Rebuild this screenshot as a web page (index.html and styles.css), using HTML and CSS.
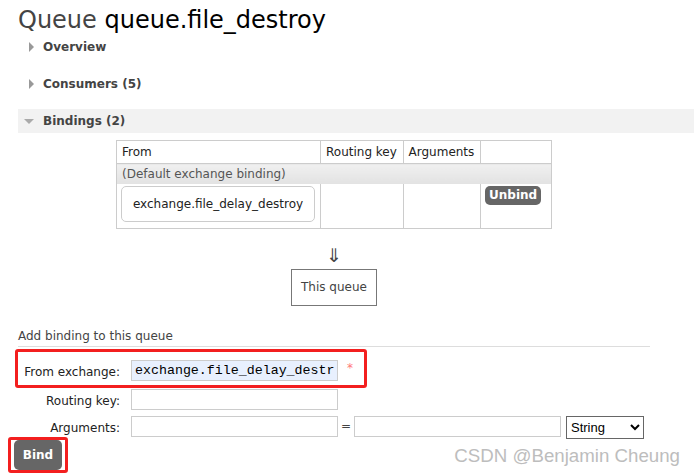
FILE: index.html
```html
<!DOCTYPE html>
<html lang="en">
<head>
    <meta charset="UTF-8">
    <title>Queue queue.file_destroy</title>
    <link rel="stylesheet" href="styles.css">
</head>
<body>
    <h1><span class="kind">Queue</span> queue.file_destroy</h1>

    <div class="section">
        <div class="section-head"><span class="tri right"></span>Overview</div>
    </div>
    <div class="section">
        <div class="section-head"><span class="tri right"></span>Consumers (5)</div>
    </div>
    <div class="section open">
        <div class="section-head"><span class="tri down"></span>Bindings (2)</div>
        <div class="bindings">
            <table class="list">
                <thead>
                    <tr>
                        <th class="c-from">From</th>
                        <th class="c-key">Routing key</th>
                        <th class="c-args">Arguments</th>
                        <th class="c-act"></th>
                    </tr>
                </thead>
                <tbody>
                    <tr class="default">
                        <td colspan="4">(Default exchange binding)</td>
                    </tr>
                    <tr>
                        <td><span class="exchange">exchange.file_delay_destroy</span></td>
                        <td></td>
                        <td></td>
                        <td class="act"><span class="btn small">Unbind</span></td>
                    </tr>
                </tbody>
            </table>
            <div class="arrow">&#8659;</div>
            <div class="this-queue">This queue</div>
        </div>
    </div>

    <h3 class="add-title">Add binding to this queue</h3>
    <form class="bind-form">
        <div class="form-row marked">
            <label>From exchange:</label>
            <input type="text" class="autofill" value="exchange.file_delay_destroy">
            <span class="req">*</span>
        </div>
        <div class="form-row">
            <label>Routing key:</label>
            <input type="text">
        </div>
        <div class="form-row">
            <label>Arguments:</label>
            <input type="text">
            <span class="eq">=</span>
            <input type="text">
            <select>
                <option>String</option>
            </select>
        </div>
        <div class="submit marked">
            <span class="btn">Bind</span>
        </div>
    </form>

    <div class="watermark">CSDN @Benjamin Cheung</div>
</body>
</html>
```

FILE: styles.css
```css
body {
    margin: 0;
    padding: 0 0 0 18px;
    font-family: "DejaVu Sans", Verdana, sans-serif;
    font-size: 12px;
    color: #484848;
    background: #fff;
    position: relative;
    height: 474px;
    overflow: hidden;
}
h1 {
    margin: 0;
    padding-top: 6px;
    height: 29px;
    font-size: 24px;
    font-weight: normal;
    color: #000;
    line-height: 29px;
}
h1 .kind {
    color: #444;
}
.section {
    margin-bottom: 13px;
}
.section-head {
    height: 24px;
    line-height: 24px;
    font-weight: bold;
    color: #444;
    display: flex;
    align-items: center;
}
.open .section-head {
    background: #f2f2f2;
}
.tri {
    display: inline-block;
    width: 0;
    height: 0;
}
.tri.right {
    border-top: 5px solid transparent;
    border-bottom: 5px solid transparent;
    border-left: 5px solid #999;
    margin-left: 11px;
    margin-right: 9px;
}
.tri.down {
    border-left: 5px solid transparent;
    border-right: 5px solid transparent;
    border-top: 5px solid #aaa;
    margin-left: 6px;
    margin-right: 9px;
}
.bindings {
    width: 632px;
    padding-top: 7px;
    display: flex;
    flex-direction: column;
    align-items: center;
}
table.list {
    border-collapse: collapse;
    border: 1px solid #ccc;
    width: 436px;
}
table.list th {
    text-align: left;
    font-weight: normal;
    color: #222;
    height: 22px;
    padding: 0 5px;
    border-left: 1px solid #ccc;
    white-space: nowrap;
}
table.list th.c-from {
    width: 193px;
}
table.list th.c-act {
    width: 60px;
}
table.list td {
    border-left: 1px solid #ccc;
    height: 40px;
    vertical-align: top;
    padding: 2px 4px;
}
table.list tr.default td {
    height: 20px;
    padding: 0 5px;
    vertical-align: middle;
    background: linear-gradient(#f0f0f0, #e2e2e2);
    color: #555;
    border-top: 1px solid #ccc;
}
.exchange {
    display: block;
    border: 1px solid #ccc;
    border-radius: 5px;
    height: 34px;
    line-height: 34px;
    text-align: center;
    color: #222;
    margin-right: 1px;
}
td.act {
    padding: 3px 5px;
}
.btn {
    display: inline-block;
    background: #666;
    color: #fff;
    font-weight: bold;
    border-radius: 5px;
}
.btn.small {
    padding: 0 4px;
    height: 19px;
    line-height: 19px;
}
.arrow {
    margin-top: 15px;
    font-size: 19px;
    line-height: 22px;
    color: #444;
}
.this-queue {
    margin-top: 3px;
    border: 1px solid #777;
    padding: 0 9px;
    height: 35px;
    line-height: 35px;
    color: #444;
}
.add-title {
    margin: 23px 0 0;
    width: 632px;
    font-size: 12px;
    line-height: 14px;
    font-weight: normal;
    color: #444;
    padding-bottom: 3px;
    border-bottom: 1px solid #ddd;
}
.bind-form {
    margin-top: 2px;
}
.form-row {
    display: flex;
    align-items: flex-start;
    height: 27px;
    padding-top: 1px;
    box-sizing: border-box;
}
.form-row label {
    width: 102px;
    text-align: right;
    color: #222;
    margin-right: 11px;
    line-height: 21px;
    margin-top: 2px;
}
.form-row input {
    width: 207px;
    height: 21px;
    box-sizing: border-box;
    border: 1px solid #ccc;
    margin: 0;
    padding: 0 3px;
    font-family: "Liberation Mono", "DejaVu Sans Mono", monospace;
    font-size: 13.3px;
    color: #000;
}
.form-row input.autofill {
    background: #e8f0fe;
}
.form-row.marked {
    border: 3px solid #f31f1f;
    border-radius: 3px;
    width: 352px;
    height: 39px;
    margin-left: -3px;
    padding-top: 8px;
}
.req {
    color: #f77;
    margin-left: 9px;
    margin-top: 1px;
}
.eq {
    width: 16px;
    text-align: center;
    color: #444;
    line-height: 21px;
}
.form-row select {
    margin-left: 5px;
    width: 78px;
    height: 23px;
    border: 1px solid #666;
    background: #fff;
    font-family: "Liberation Sans", Arial, sans-serif;
    font-size: 13px;
    color: #000;
}
.submit.marked {
    display: inline-block;
    margin-left: -10px;
    margin-top: -5px;
    border: 3px solid #f31f1f;
    border-radius: 3px;
    padding: 0 3px;
}
.submit .btn {
    display: block;
    width: 48px;
    height: 30px;
    line-height: 30px;
    text-align: center;
}
.watermark {
    position: absolute;
    right: 14px;
    bottom: 7px;
    font-family: "Liberation Sans", Arial, sans-serif;
    font-size: 18.7px;
    color: #bdbdbd;
}
```
